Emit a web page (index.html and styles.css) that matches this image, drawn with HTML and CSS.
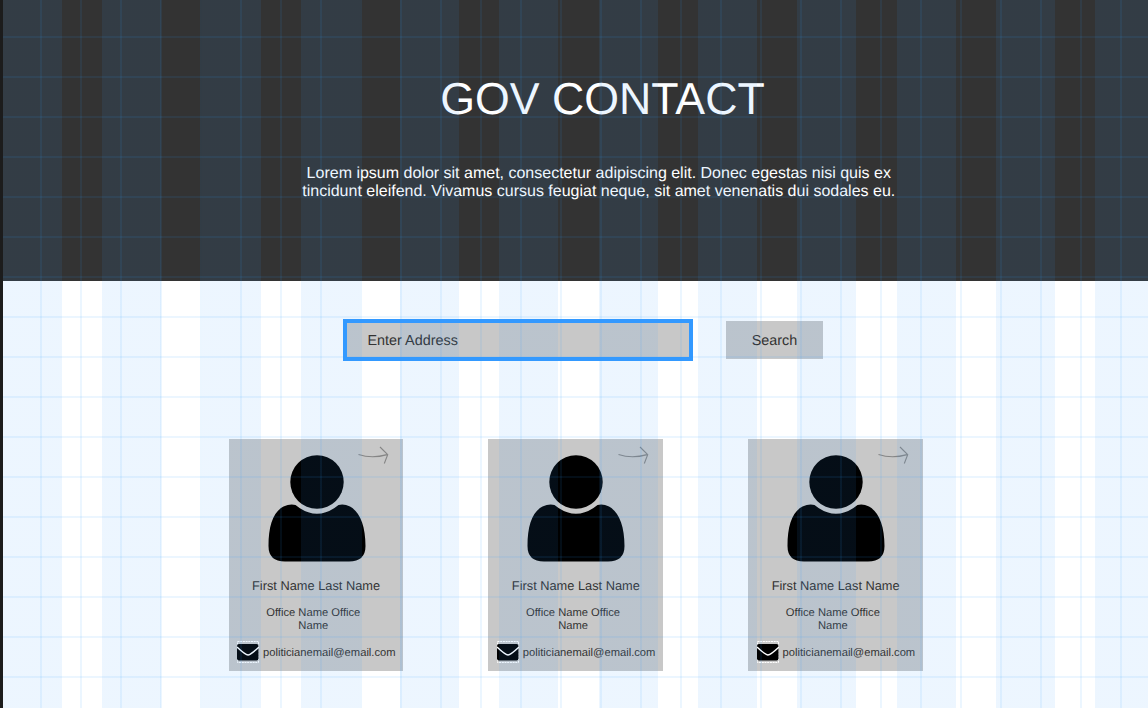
FILE: index.html
```
<!DOCTYPE html>
<html lang="en">
<head>
<meta charset="utf-8">
<title>Gov Contact</title>
<link rel="stylesheet" href="styles.css">
</head>
<body>
<svg class="defs" width="0" height="0" aria-hidden="true">
  <symbol id="arrow" viewBox="0 0 32 20"><path d="M1.500 8.500Q15 13 30 8.600M23 1L30.700 8.600L27.300 17.500" fill="none" stroke="#858585" stroke-width="1.100"/></symbol>
  <symbol id="person" viewBox="0 0 98 108"><circle cx="49" cy="27" r="26.700"/><path d="M27.500 50Q22 48.500 15.500 51.500C5 57 .5 71 .5 91Q.5 106.500 17 106.500H81Q97.500 106.500 97.500 91C97.500 71 92 57 82 51.500Q76 48.500 70.500 50Q49 67.500 27.500 50Z"/></symbol>
  <symbol id="mail" viewBox="0 0 22 22"><rect x=".5" y=".5" width="21" height="21" fill="none" stroke="#fff" stroke-dasharray="2 .7"/><rect x="0" y="3" width="21.500" height="16.500" rx="2"/><path d="M0 6Q8.500 14 11 14T22 6" fill="none" stroke="#fff" stroke-width="1.400"/></symbol>
</svg>
<div class="page">
  <header class="hero">
    <h1 class="title">GOV CONTACT</h1>
    <p class="intro">Lorem ipsum dolor sit amet, consectetur adipiscing elit. Donec egestas nisi quis ex<br>tincidunt eleifend. Vivamus cursus feugiat neque, sit amet venenatis dui sodales eu.</p>
  </header>
  <main>
    <div class="search">
      <div class="field">Enter Address</div>
      <div class="button">Search</div>
    </div>
    <div class="cards">
      <article class="card">
        <svg class="arrow"><use href="#arrow"/></svg>
        <svg class="person"><use href="#person"/></svg>
        <div class="name">First Name Last Name</div>
        <div class="office">Office Name Office<br>Name</div>
        <div class="contact"><svg class="mail"><use href="#mail"/></svg><span>politicianemail@email.com</span></div>
      </article>
      <article class="card">
        <svg class="arrow"><use href="#arrow"/></svg>
        <svg class="person"><use href="#person"/></svg>
        <div class="name">First Name Last Name</div>
        <div class="office">Office Name Office<br>Name</div>
        <div class="contact"><svg class="mail"><use href="#mail"/></svg><span>politicianemail@email.com</span></div>
      </article>
      <article class="card">
        <svg class="arrow"><use href="#arrow"/></svg>
        <svg class="person"><use href="#person"/></svg>
        <div class="name">First Name Last Name</div>
        <div class="office">Office Name Office<br>Name</div>
        <div class="contact"><svg class="mail"><use href="#mail"/></svg><span>politicianemail@email.com</span></div>
      </article>
    </div>
  </main>
  <div class="guides"></div>
</div>
</body>
</html>
```
FILE: styles.css
```
* { box-sizing: border-box; }
body {
  margin: 0;
  background: #fff;
  color: #333;
  font-family: "Liberation Sans", Arial, sans-serif;
  text-rendering: geometricPrecision;
}
.defs { position: absolute; }
.page {
  position: relative;
  height: 708px;
  border-left: 3px solid #1c1c1c;
  overflow: hidden;
}
.hero {
  height: 281px;
  padding-top: 74px;
  background: #333;
  color: #fff;
  text-align: center;
}
.title {
  margin: 0 0 0 54px;
  font-size: 44.700px;
  font-weight: 400;
  line-height: 52px;
}
.intro {
  margin: 39px 0 0 46.500px;
  font-size: 16px;
  line-height: 17.500px;
  white-space: nowrap;
}
.search {
  display: flex;
  align-items: center;
  gap: 33px;
  padding: 38px 0 0 340px;
  font-size: 14.400px;
}
.field {
  width: 350px;
  height: 42px;
  padding-left: 20.500px;
  border: 4px solid #39f;
  background: #c8c8c8;
  line-height: 36px;
}
.button {
  width: 97px;
  height: 38px;
  background: #c8c8c8;
  line-height: 40px;
  text-align: center;
}
.cards {
  display: flex;
  gap: 85.300px;
  padding: 78px 0 0 225.500px;
}
.card {
  position: relative;
  width: 174.500px;
  height: 232px;
  padding-top: 15.500px;
  background: #c8c8c8;
  text-align: center;
}
.arrow {
  position: absolute;
  top: 7px;
  right: 14px;
  width: 32px;
  height: 20px;
}
.person {
  display: block;
  width: 98px;
  height: 108px;
  margin-left: 39px;
}
.name {
  margin: 15.500px 0 0 .6px;
  font-size: 12.800px;
  line-height: 16px;
}
.office {
  margin: 12.500px 5px 0 0;
  font-size: 11.200px;
  line-height: 13px;
}
.contact {
  display: flex;
  align-items: center;
  gap: 4px;
  margin: 8.500px 0 0 8.500px;
  font-size: 11.200px;
}
.contact span { padding-top: 1px; }
.mail { width: 22px; height: 22px; }
.guides {
  position: absolute;
  inset: 0;
  pointer-events: none;
  background:
    linear-gradient(90deg, rgba(40, 155, 255, .09) 2px, transparent 2px) 37px 0 / 40px 40px,
    linear-gradient(180deg, rgba(40, 155, 255, .09) 2px, transparent 2px) 0 36px / 40px 40px,
    repeating-linear-gradient(90deg, rgba(51, 153, 255, .09) 0 59px, transparent 59px 99.300px);
}
```
